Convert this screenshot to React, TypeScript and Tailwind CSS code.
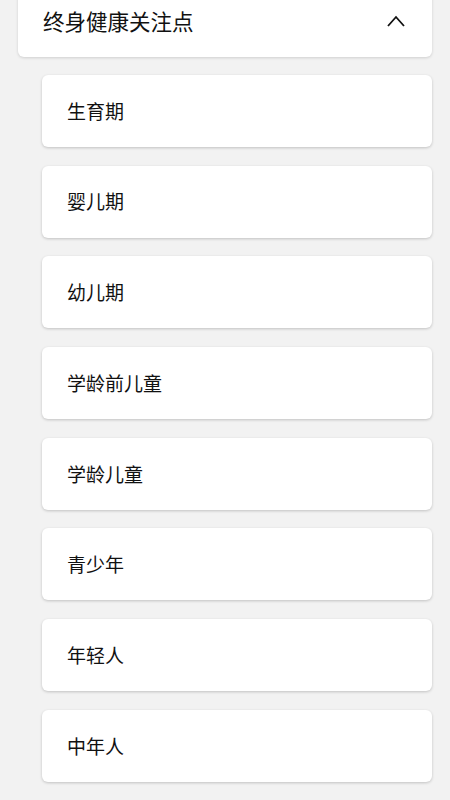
import React from "react";

const items = ["生育期", "婴儿期", "幼儿期", "学龄前儿童", "学龄儿童", "青少年", "年轻人", "中年人"];

export default function App() {
  return (
    <div
      className="w-[450px] h-[800px] overflow-hidden bg-[#f2f2f2]"
      style={{ fontFamily: '"Noto Sans CJK SC", "Noto Sans", sans-serif' }}
    >
      <div className="ml-[18px] mr-[18px] -mt-[15px] h-[72px] bg-white rounded-[6px] shadow-[0_1px_3px_rgba(0,0,0,0.15)] flex items-center justify-between pl-[25px] pr-[26px]">
        <span className="text-[21.5px] text-[#111]">终身健康关注点</span>
        <svg width="20" height="14" viewBox="0 0 20 14" fill="none">
          <path d="M2 12 L10 3 L18 12" stroke="#111" strokeWidth="1.8" />
        </svg>
      </div>
      <div className="flex flex-col gap-[18.7px] mt-[18px] ml-[42px] mr-[18px]">
        {items.map((t) => (
          <div
            key={t}
            className="h-[72px] bg-white rounded-[6px] shadow-[0_1px_3px_rgba(0,0,0,0.2)] flex items-center pl-[25px]"
          >
            <span className="text-[19px] text-[#111]">{t}</span>
          </div>
        ))}
      </div>
    </div>
  );
}
